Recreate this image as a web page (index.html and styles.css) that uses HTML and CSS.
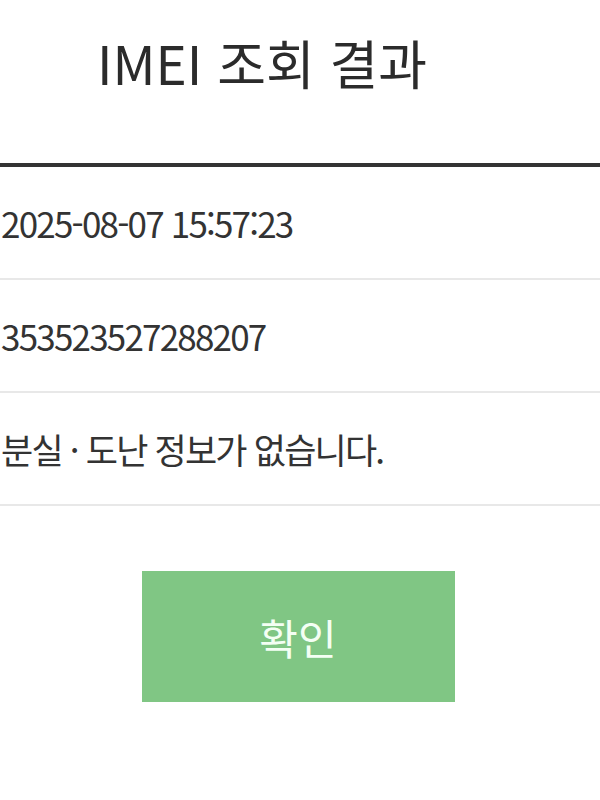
FILE: index.html
```html
<!DOCTYPE html>
<html lang="ko">
<head>
<meta charset="utf-8">
<title>IMEI 조회 결과</title>
<link rel="stylesheet" href="styles.css">
</head>
<body>
<header class="header">
  <h1 class="title">IMEI 조회 결과</h1>
</header>
<ul class="result">
  <li class="row"><span class="value">2025-08-07 15:57:23</span></li>
  <li class="row"><span class="value">353523527288207</span></li>
  <li class="row"><span class="value">분실 · 도난 정보가 없습니다.</span></li>
</ul>
<div class="actions">
  <button class="confirm" type="button">확인</button>
</div>
</body>
</html>
```
FILE: styles.css
```css
html, body {
  margin: 0;
  padding: 0;
  background: #ffffff;
}
body {
  font-family: "Noto Sans CJK KR", "Noto Sans", sans-serif;
  color: #333333;
  width: 600px;
  overflow: hidden;
}
.header {
  height: 163px;
  box-sizing: border-box;
  padding-top: 24px;
  padding-right: 76px;
}
.title {
  margin: 0;
  text-align: center;
  font-size: 53px;
  font-weight: 400;
  line-height: 76px;
  color: #2b2b2b;
}
.result {
  list-style: none;
  margin: 0;
  padding: 0;
  border-top: 4px solid #333333;
}
.row {
  height: 111px;
  border-bottom: 2px solid #e8e8e8;
  display: flex;
  align-items: center;
  padding-left: 1px;
}
.value {
  font-size: 35px;
  line-height: 1;
  letter-spacing: -1.8px;
  color: #333333;
}
.actions {
  display: flex;
  justify-content: center;
  padding-top: 65px;
}
.confirm {
  width: 313px;
  height: 131px;
  border: 0;
  background: #80c684;
  color: #f4fff4;
  font-family: "Noto Sans CJK KR", "Noto Sans", sans-serif;
  font-size: 42px;
  margin-left: -4px;
}
```
